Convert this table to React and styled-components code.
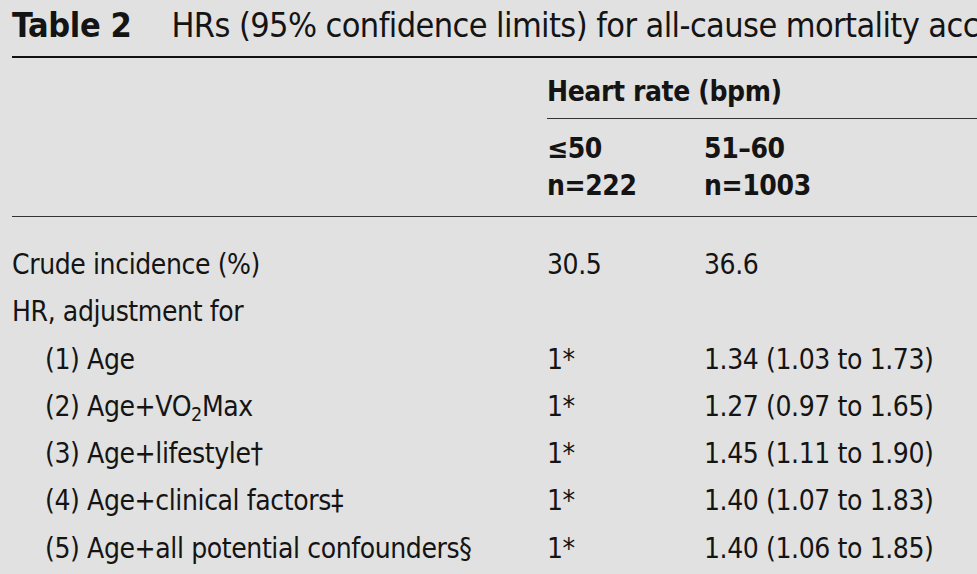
import React from 'react';
import styled, { createGlobalStyle } from 'styled-components';

const GlobalStyle = createGlobalStyle`
  html, body {
    margin: 0;
    padding: 0;
    background: #e1e1e1;
    overflow: hidden;
  }
  body {
    font-family: "DejaVu Sans Condensed", "Liberation Sans Narrow", "DejaVu Sans", sans-serif;
    font-stretch: condensed;
    color: #141414;
  }
`;

const Page = styled.div`
  width: 1500px;
  padding: 0 0 0 12px;
`;

const Caption = styled.div`
  font-size: 34px;
  letter-spacing: -0.6px;
  line-height: 44px;
  padding: 3px 0 9px;
  white-space: nowrap;
  border-bottom: 2px solid #111;
`;

const Label = styled.span`
  font-weight: 700;
  letter-spacing: -0.4px;
  margin-right: 40px;
`;

const Grid = styled.div`
  display: grid;
  grid-template-columns: 535px 157px 260px 1fr;
  font-size: 28px;
  letter-spacing: -0.4px;
`;

const Spanner = styled.div`
  grid-column: 2 / -1;
  font-weight: 700;
  line-height: 34px;
  padding: 17px 0 9px;
  border-bottom: 1px solid #333;
`;

const Blank = styled.div``;

const HeadRow = styled.div`
  grid-column: 1 / -1;
  display: grid;
  grid-template-columns: subgrid;
  padding: 11px 0 12px;
  border-bottom: 1px solid #333;
  margin-bottom: 24px;
`;

const HeadCell = styled.div`
  font-weight: 700;
  line-height: 37px;
  white-space: nowrap;
`;

const Cell = styled.div`
  line-height: 47.3px;
  white-space: nowrap;
  padding-left: ${p => (p.$indent ? '33px' : '0')};
`;

const Sub = styled.sub`
  font-size: 0.7em;
  vertical-align: -0.25em;
  line-height: 0;
`;

const rows = [
  { label: 'Crude incidence (%)', a: '30.5', b: '36.6' },
  { label: 'HR, adjustment for', a: '', b: '' },
  { label: '(1) Age', a: '1*', b: '1.34 (1.03 to 1.73)', indent: true },
  { label: <>(2) Age+VO<Sub>2</Sub>Max</>, a: '1*', b: '1.27 (0.97 to 1.65)', indent: true },
  { label: '(3) Age+lifestyle†', a: '1*', b: '1.45 (1.11 to 1.90)', indent: true },
  { label: '(4) Age+clinical factors‡', a: '1*', b: '1.40 (1.07 to 1.83)', indent: true },
  { label: '(5) Age+all potential confounders§', a: '1*', b: '1.40 (1.06 to 1.85)', indent: true },
];

export default function App() {
  return (
    <Page>
      <GlobalStyle />
      <Caption>
        <Label>Table 2</Label>HRs (95% confidence limits) for all-cause mortality acc
      </Caption>
      <Grid>
        <Blank />
        <Spanner>Heart rate (bpm)</Spanner>
        <HeadRow>
          <Blank />
          <HeadCell>≤50<br />n=222</HeadCell>
          <HeadCell>51–60<br />n=1003</HeadCell>
          <Blank />
        </HeadRow>
        {rows.map((r, i) => (
          <React.Fragment key={i}>
            <Cell $indent={r.indent}>{r.label}</Cell>
            <Cell>{r.a}</Cell>
            <Cell>{r.b}</Cell>
            <Cell />
          </React.Fragment>
        ))}
      </Grid>
    </Page>
  );
}
